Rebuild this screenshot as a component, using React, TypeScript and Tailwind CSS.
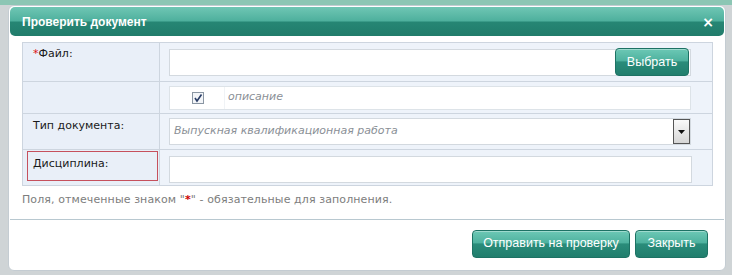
import React from "react";

const btn =
  "flex items-center justify-center h-[28px] rounded-[4px] border border-[#1d7264] text-white bg-[linear-gradient(to_bottom,#6cc8b5_0%,#4fb29f_45%,#2a8c7a_50%,#217e6d_100%)] shadow-[inset_0_1px_0_rgba(255,255,255,0.35)]";

export default function App() {
  return (
    <div className="w-[732px] h-[275px] overflow-hidden bg-[linear-gradient(to_bottom,#8cc6b4_0px,#8cc6b4_5px,#cfd4d6_5px,#cfd4d6_100%)] pt-[5px] pl-[8px] font-['DejaVu_Sans',sans-serif]">
      <div className="w-[718px] h-[266px] bg-white rounded-[6px] border border-[#c4ccd2] p-[1px] flex flex-col">
        <div className="h-[29px] rounded-[5px] flex items-center justify-between pl-[12px] pr-[10px] bg-[linear-gradient(to_bottom,#6fc6b4_0%,#4eb09d_48%,#268674_52%,#217c6b_100%)]">
          <span className="text-white font-bold text-[12px] font-['Liberation_Sans',sans-serif]">
            Проверить документ
          </span>
          <span className="text-white font-bold text-[14px] leading-none">×</span>
        </div>
        <div className="pl-[12px] pt-[6px]">
          <table className="w-[691px] border-collapse text-[11px] text-[#1a1a1a]">
            <tbody>
              <tr className="h-[39px]">
                <td className="w-[137px] align-top border border-[#cdd5df] bg-[#e9eff8] pl-[10px] pt-[3px]">
                  <span className="text-[#d11]">*</span>Файл:
                </td>
                <td className="border border-[#cdd5df] bg-[#eef3fa] pl-[9px] pr-[21px]">
                  <div className="h-[27px] bg-white border border-[#d3d9df] flex items-center justify-end pr-[1px]">
                    <div className={btn + " w-[74px] h-[24px] text-[12.5px] font-['Liberation_Sans',sans-serif]"}>Выбрать</div>
                  </div>
                </td>
              </tr>
              <tr className="h-[32px]">
                <td className="border border-[#cdd5df] bg-[#e9eff8]"></td>
                <td className="border border-[#cdd5df] bg-[#eef3fa] pl-[9px] pr-[21px]">
                  <div className="h-[24px] bg-white border border-[#dde3e8] flex items-center">
                    <div className="w-[55px] h-full flex items-center pl-[22px] border-r border-[#f0f3f6]">
                      <svg width="12" height="12" viewBox="0 0 12 12">
                        <rect x="0.5" y="0.5" width="11" height="11" fill="#f3f5f8" stroke="#8a96a3" />
                        <path d="M3 6 L5 9 L9.5 2.5" fill="none" stroke="#2a3d66" strokeWidth="1.6" />
                      </svg>
                    </div>
                    <span className="italic text-[#8a8f96] pl-[3px]">описание</span>
                  </div>
                </td>
              </tr>
              <tr className="h-[36px]">
                <td className="border border-[#cdd5df] bg-[#e9eff8] pl-[10px] pt-[4px] align-top">Тип документа:</td>
                <td className="border border-[#cdd5df] bg-[#eef3fa] pl-[9px] pr-[21px]">
                  <div className="h-[27px] bg-white border border-[#d3d9df] flex items-center justify-between">
                    <span className="italic text-[#8a8f96] text-[11px] pl-[4px]">
                      Выпускная квалификационная работа
                    </span>
                    <div className="w-[17px] h-[25px] border border-[#555] bg-[linear-gradient(to_bottom,#fafafa,#d6d6d6)] flex items-center justify-center">
                      <svg width="7" height="4" viewBox="0 0 7 4">
                        <path d="M0 0 H7 L3.5 4 Z" fill="#111" />
                      </svg>
                    </div>
                  </div>
                </td>
              </tr>
              <tr className="h-[36px]">
                <td className="border border-[#cdd5df] bg-[#e9eff8] p-[1px] pl-[4px] align-top">
                  <div className="h-[30px] border border-[#c6505d] pl-[5px] pt-[4px]">Дисциплина:</div>
                </td>
                <td className="border border-[#cdd5df] bg-[#eef3fa] pl-[9px] pr-[20px] pt-[4px]">
                  <div className="h-[27px] bg-white border border-[#d3d9df]"></div>
                </td>
              </tr>
            </tbody>
          </table>
          <div className="text-[11px] text-[#7d7d7d] mt-[6px] tracking-[0.1px]">
            Поля, отмеченные знаком "<span className="text-[#c00] font-bold">*</span>" - обязательные для заполнения.
          </div>
        </div>
        <div className="mt-[10px] border-t border-[#b8c8d0]" />
        <div className="flex justify-end gap-[5px] pr-[16px] pt-[10px] text-[12.5px] font-['Liberation_Sans',sans-serif]">
          <div className={btn + " w-[158px]"}>Отправить на проверку</div>
          <div className={btn + " w-[73px]"}>Закрыть</div>
        </div>
      </div>
    </div>
  );
}
